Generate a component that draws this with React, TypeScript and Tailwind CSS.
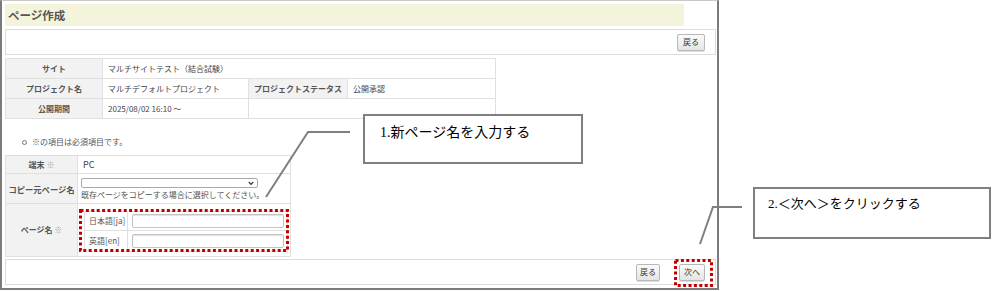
import React from "react";

function Btn({ children, w }: { children: React.ReactNode; w: string }) {
  return (
    <div
      className={`${w} h-[17px] flex items-center justify-center border border-[#b8b8b8] rounded-[2px] bg-linear-to-b from-[#fbfbfb] to-[#e4e4e4] text-[8px] leading-none text-[#333] shadow-[0_1px_0_#ddd]`}
    >
      {children}
    </div>
  );
}

const th =
  "border border-[#e0e0e0] bg-[#f2f2f2] font-bold text-[#555] text-center p-0 whitespace-nowrap";
const td = "border border-[#e0e0e0] bg-white text-left pl-[5px] p-0 text-[#444] whitespace-nowrap";

export default function App() {
  return (
    <div className="relative w-[994px] h-[291px] bg-white overflow-hidden font-['Noto_Sans_CJK_JP','Noto_Sans',sans-serif] text-[8px] leading-[12px] text-[#444]">
      <div className="w-[719px] h-[290px] border-l-2 border-r-2 border-b-2 border-t border-l-[#7b7b7b] border-r-[#7b7b7b] border-b-[#7b7b7b] border-t-[#c8c8c8] pt-[3px] pl-[3px] pr-px flex flex-col">
        <div className="w-[679px] h-[22px] shrink-0 bg-[#f4f4dc] flex items-center pl-[3px] text-[11.5px] font-bold text-[#555]">
          ページ作成
        </div>
        <div className="mt-[3px] h-[26px] shrink-0 border border-[#dcdcdc] flex items-center justify-end pr-[10px]">
          <Btn w="w-[28px]">戻る</Btn>
        </div>

        <table className="mt-[3px] w-[490px] border-collapse table-fixed">
          <colgroup>
            <col className="w-[97px]" />
            <col className="w-[146px]" />
            <col className="w-[99px]" />
            <col className="w-[148px]" />
          </colgroup>
          <tbody>
            <tr className="h-[20px]">
              <th className={th}>サイト</th>
              <td className={td} colSpan={3}>
                マルチサイトテスト（結合試験）
              </td>
            </tr>
            <tr className="h-[20px]">
              <th className={th}>プロジェクト名</th>
              <td className={td}>マルチデフォルトプロジェクト</td>
              <th className={th}>プロジェクトステータス</th>
              <td className={td}>公開承認</td>
            </tr>
            <tr className="h-[20px]">
              <th className={th}>公開期間</th>
              <td className={td}>2025/08/02 16:10 ～</td>
              <td className={td} colSpan={2}></td>
            </tr>
          </tbody>
        </table>

        <div className="mt-[17px] h-[12px] shrink-0 flex items-center pl-[17px] text-[#555]">
          <span className="w-[5px] h-[5px] rounded-full border border-[#777] mr-[5px]" />
          <span>※の項目は必須項目です。</span>
        </div>

        <table className="mt-[7px] w-[285px] border-collapse table-fixed">
          <colgroup>
            <col className="w-[72px]" />
            <col className="w-[213px]" />
          </colgroup>
          <tbody>
            <tr className="h-[18px]">
              <th className={th}>
                端末 <span className="font-normal text-[#999]">※</span>
              </th>
              <td className={`${td} text-[9px] text-[#333]`}>PC</td>
            </tr>
            <tr className="h-[30px]">
              <th className={`${th} text-[8.3px]`}>コピー元ページ名</th>
              <td className="border border-[#e0e0e0] pl-[3px] p-0 align-middle">
                <div className="relative w-[177px] h-[10px] border border-[#a9a9a9] rounded-[2px] bg-white">
                  <svg
                    className="absolute right-[3px] top-[2px]"
                    width="6"
                    height="5"
                    viewBox="0 0 6 5"
                  >
                    <polyline points="0.8,1 3,3.4 5.2,1" fill="none" stroke="#333" strokeWidth="1.2" />
                  </svg>
                </div>
                <div className="mt-[1px] leading-[11px] text-[#555] whitespace-nowrap">
                  既存ページをコピーする場合に選択してください。
                </div>
              </td>
            </tr>
            <tr className="h-[53px]">
              <th className={th}>
                ページ名 <span className="font-normal text-[#999]">※</span>
              </th>
              <td className="border border-[#e0e0e0] p-0 pl-[6px] pt-[7px] align-top">
                <div className="relative w-[203px]">
                  <table className="w-[203px] border-collapse table-fixed">
                    <colgroup>
                      <col className="w-[43px]" />
                      <col className="w-[160px]" />
                    </colgroup>
                    <tbody>
                      <tr className="h-[19px]">
                        <td className="border border-[#e0e0e0] pl-[4px] p-0 whitespace-nowrap text-[#555]">
                          日本語[ja]
                        </td>
                        <td className="border border-[#e0e0e0] p-0 pl-[4px]">
                          <div className="w-[152px] h-[14px] border border-[#c4c4c4] rounded-[2px] bg-white shadow-[inset_0_1px_1px_rgba(0,0,0,0.12)]" />
                        </td>
                      </tr>
                      <tr className="h-[21px]">
                        <td className="border border-[#e0e0e0] pl-[4px] p-0 whitespace-nowrap text-[#555]">
                          英語[en]
                        </td>
                        <td className="border border-[#e0e0e0] p-0 pl-[4px]">
                          <div className="w-[152px] h-[14px] border border-[#c4c4c4] rounded-[2px] bg-white shadow-[inset_0_1px_1px_rgba(0,0,0,0.12)]" />
                        </td>
                      </tr>
                    </tbody>
                  </table>
                  <svg
                    className="absolute left-[-5px] top-[-2px] pointer-events-none"
                    width="210"
                    height="43"
                    viewBox="0 0 210 43"
                  >
                    <rect
                      x="1.5"
                      y="1.5"
                      width="207"
                      height="40"
                      fill="none"
                      stroke="#c00000"
                      strokeWidth="3"
                      strokeDasharray="3 2.4"
                    />
                  </svg>
                </div>
              </td>
            </tr>
          </tbody>
        </table>

        <div className="mt-[2px] h-[26px] shrink-0 border border-[#dcdcdc] flex items-center justify-end pr-[10px] gap-[19px]">
          <Btn w="w-[24px]">戻る</Btn>
          <div className="relative">
            <Btn w="w-[26px]">次へ</Btn>
            <svg
              className="absolute left-[-5px] top-[-5px] pointer-events-none"
              width="39"
              height="28"
              viewBox="0 0 39 28"
            >
              <rect
                x="1.5"
                y="1.5"
                width="36"
                height="25"
                fill="none"
                stroke="#c00000"
                strokeWidth="3"
                strokeDasharray="3 2.4"
              />
            </svg>
          </div>
        </div>
      </div>

      {/* annotation layer */}
      <svg
        className="absolute left-0 top-0 pointer-events-none"
        width="994"
        height="291"
        viewBox="0 0 994 291"
      >
        <polyline points="350,132 308,132 266,197" fill="none" stroke="#7f7f7f" strokeWidth="2" />
        <polyline points="742,207 713,207 700,244" fill="none" stroke="#7f7f7f" strokeWidth="2" />
      </svg>
      <div className="absolute left-[363px] top-[114px] w-[220px] h-[50px] border-2 border-[#7f7f7f] bg-white pl-[15px] pt-[9px] text-[14px] leading-[16px] text-black font-['Liberation_Serif','Noto_Sans_CJK_JP',serif] whitespace-nowrap">
        1.新ページ名を入力する
      </div>
      <div className="absolute left-[753px] top-[187px] w-[238px] h-[52px] border-2 border-[#7f7f7f] bg-white pl-[13px] pt-[7px] text-[13px] leading-[16px] text-black font-['Liberation_Serif','Noto_Sans_CJK_JP',serif] whitespace-nowrap">
        2.＜次へ＞をクリックする
      </div>
    </div>
  );
}
